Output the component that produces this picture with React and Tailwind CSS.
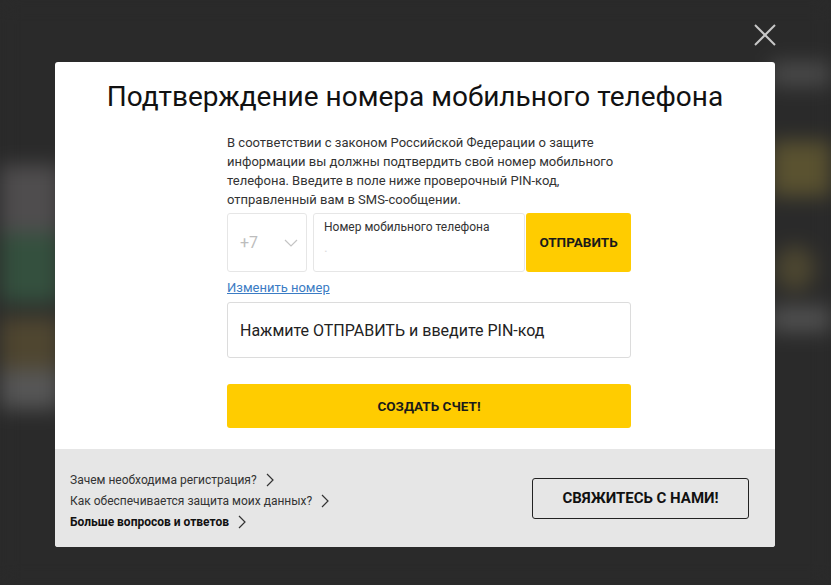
import React, { useState } from "react";

const Chevron = ({ className = "" }) => (
  <svg
    className={className}
    width="8"
    height="14"
    viewBox="0 0 8 14"
    fill="none"
    stroke="currentColor"
    strokeWidth="1.2"
  >
    <polyline points="1,1 7,7 1,13" />
  </svg>
);

const CloseIcon = () => (
  <svg width="22" height="22" viewBox="0 0 22 22" stroke="#c8c8c8" strokeWidth="2">
    <line x1="1" y1="1" x2="21" y2="21" />
    <line x1="21" y1="1" x2="1" y2="21" />
  </svg>
);

// blurred page behind the overlay
const BackdropPage = () => (
  <div className="flex h-[585px] w-full justify-between bg-[#2a2a2a] blur-[10px]">
    <div className="flex w-[60px] flex-col">
      <div className="h-[165px]" />
      <div className="h-[68px] bg-[#4f4d4e]" />
      <div className="h-[70px] bg-[#34503e]" />
      <div className="h-[14px]" />
      <div className="h-[52px] bg-[#4f4630]" />
      <div className="h-[40px] bg-[#565656]" />
    </div>
    <div className="flex w-[60px] flex-col">
      <div className="h-[62px]" />
      <div className="h-[24px] bg-[#4a4a4a]" />
      <div className="h-[55px]" />
      <div className="h-[55px] bg-[#5a5230]" />
      <div className="h-[50px]" />
      <div className="ml-1 h-[45px] w-[40px] rounded-full bg-[#4c4630]" />
      <div className="h-[15px]" />
      <div className="h-[26px] bg-[#505050]" />
    </div>
  </div>
);

const PhoneRow = ({ phone, setPhone }) => (
  <div className="mt-1 flex h-[59px]">
    <div className="flex w-[80px] items-center justify-between rounded-[3px] border border-[#e6e6e6] pl-3 pr-2">
      <span className="text-base text-[#bdbdbd]">+7</span>
      <svg width="14" height="8" viewBox="0 0 14 8" fill="none" stroke="#c4c4c4" strokeWidth="1.2">
        <polyline points="1,1 7,7 13,1" />
      </svg>
    </div>
    <div className="ml-[6px] flex w-[212px] flex-col rounded-[3px] border border-[#e6e6e6] px-[10px] pt-[4px]">
      <label className="text-xs leading-[18px] text-[#333]">Номер мобильного телефона</label>
      <input
        className="h-[22px] text-sm text-[#333] outline-none placeholder:text-[#ddd]"
        placeholder="."
        value={phone}
        onChange={(e) => setPhone(e.target.value)}
      />
    </div>
    <button className="ml-px w-[105px] rounded-[3px] bg-[#ffcc00] text-[13.5px] font-bold text-[#1a1a1a]">
      ОТПРАВИТЬ
    </button>
  </div>
);

const FooterLink = ({ text, bold }) => (
  <a
    href="#"
    className={
      "flex items-center leading-[21px] " +
      (bold ? "font-bold text-[#111]" : "text-[#333]")
    }
  >
    <span>{text}</span>
    <Chevron className="ml-[9px] text-[#333]" />
  </a>
);

const App = () => {
  const [phone, setPhone] = useState("");
  const [pin, setPin] = useState("");

  return (
    <div className="relative h-[585px] w-[831px] overflow-hidden bg-[#2a2a2a] font-['Roboto',sans-serif]">
      <BackdropPage />

      <div className="absolute inset-0">
        <button className="absolute left-[754px] top-[24px]">
          <CloseIcon />
        </button>

        <div className="absolute left-[55px] top-[62px] flex w-[720px] flex-col overflow-hidden rounded-[3px] bg-white">
          <div className="flex flex-col pb-[21px] pt-[18px]">
            <h1 className="text-center text-[28px] leading-[34px] text-[#111]">
              Подтверждение номера мобильного телефона
            </h1>

            <div className="ml-[172px] mt-[19px] w-[404px]">
              <p className="text-[13px] leading-[19px] text-[#333]">
                В соответствии с законом Российской Федерации о защите
                информации вы должны подтвердить свой номер мобильного
                телефона. Введите в поле ниже проверочный PIN-код,
                отправленный вам в SMS-сообщении.
              </p>

              <PhoneRow phone={phone} setPhone={setPhone} />

              <a
                href="#"
                className="mt-[6px] block text-[13px] leading-[19px] text-[#3b7cc4] underline"
              >
                Изменить номер
              </a>

              <input
                className="mt-[5px] h-[56px] w-full rounded-[3px] border border-[#dcdcdc] px-3 text-base text-[#222] outline-none placeholder:text-[#222]"
                placeholder="Нажмите ОТПРАВИТЬ и введите PIN-код"
                value={pin}
                onChange={(e) => setPin(e.target.value)}
              />

              <button className="mt-[26px] h-[44px] w-full rounded-[3px] bg-[#ffcc00] text-[13.5px] font-bold text-[#1a1a1a]">
                СОЗДАТЬ СЧЕТ!
              </button>
            </div>
          </div>

          <div className="flex h-[98px] items-center justify-between bg-[#e6e6e6] pl-[15px] pr-[26px]">
            <div className="flex flex-col pt-[6px] text-xs">
              <FooterLink text="Зачем необходима регистрация?" />
              <FooterLink text="Как обеспечивается защита моих данных?" />
              <FooterLink text="Больше вопросов и ответов" bold />
            </div>
            <button className="h-[41px] w-[217px] rounded-[3px] border border-[#222] text-[15px] font-bold text-[#111]">
              СВЯЖИТЕСЬ С НАМИ!
            </button>
          </div>
        </div>
      </div>
    </div>
  );
};

export default App;
